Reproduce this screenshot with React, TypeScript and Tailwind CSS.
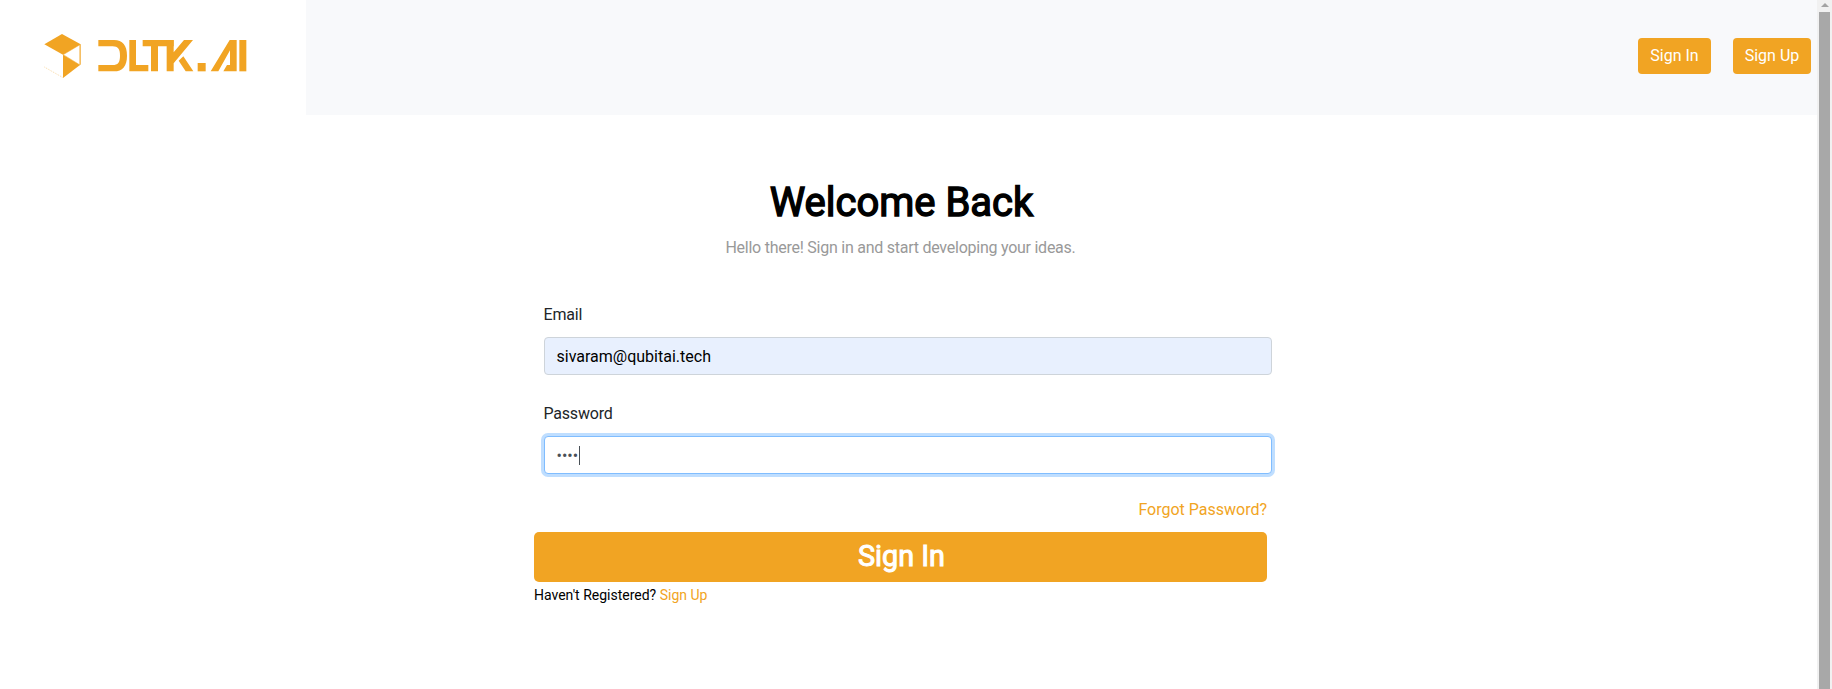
import React from "react";

function Logo() {
  return (
    <svg width="230" height="70" viewBox="0 0 690 210" fill="#f1a423" role="img" aria-label="DLTK.AI">
      <path d="M43 73 L96 42 L152 73 L99 104 Z" />
      <path d="M99 104 L150 135 L99 174 Z" />
      <path d="M148 73 H153 V134 H148 Z" opacity="0.7" />
      <path d="M100 104 L150 74 M100 104 L150 135" stroke="#f1a423" strokeWidth="1.5" fill="none" />
      <path d="M43 141 L99 173" stroke="#f1a423" strokeWidth="2" strokeDasharray="3 3" opacity="0.6" fill="none" />
      <path d="M205 60 H252 C278 60 291 76 291 107 C291 138 278 154 252 154 H205 V135 H248 C264 135 270 127 270 107 C270 87 264 79 248 79 H205 Z" />
      <path d="M298 60 H318 V135 H355 V154 H298 Z" />
      <path d="M338 60 H431 V79 H384 V154 H363 V79 H338 Z" />
      <path d="M410 60 H431 V97 L462 60 H489 L431 130 V154 H410 Z" />
      <path d="M446 122 L460 109 L490 154 H467 Z" />
      <path d="M503 129 H527 V154 H503 Z" />
      <path d="M542 154 L599 60 H620 V154 H580 L591 135 H600 V91 L565 154 Z" />
      <path d="M628 60 H649 V154 H628 Z" />
    </svg>
  );
}

function Header() {
  return (
    <header className="flex h-[115px] bg-[#f8f9fb]">
      <div className="w-[306px] bg-white pt-5 pl-[30px]">
        <Logo />
      </div>
      <nav className="flex flex-1 items-start justify-end gap-[22px] pt-[38px] pr-[6px]">
        <button className="h-9 w-[73px] rounded-[4px] bg-[#f1a423] pb-px text-white">Sign In</button>
        <button className="h-9 w-[78px] rounded-[4px] bg-[#f1a423] pb-px text-white">Sign Up</button>
      </nav>
    </header>
  );
}

function Scrollbar() {
  return (
    <div className="flex w-[15px] shrink-0 flex-col bg-[#f1f1f1] pr-[2px] pl-[2px]">
      <div className="flex h-3 items-start justify-center pt-[3px]">
        <svg width="8" height="4" viewBox="0 0 8 4" fill="#a3a3a3">
          <path d="M4 0 L8 4 H0 Z" />
        </svg>
      </div>
      <div className="flex-1 bg-[#a8a8a8]" />
    </div>
  );
}

export default function App() {
  return (
    <div className="flex h-[689px] w-[1832px] overflow-hidden bg-white font-['Roboto',sans-serif] text-[16px] leading-6 text-[#212529]">
      <div className="flex w-[1817px] flex-col">
        <Header />
        <main className="ml-[534px] flex w-[738px] flex-col">
          <div className="mr-[5px] flex flex-col items-center text-center">
            <h1 className="mt-[62px] ml-[2px] text-[40px] leading-[52px] font-normal text-black [-webkit-text-stroke:1.4px_black]">
              Welcome Back
            </h1>
            <p className="mt-[7px] tracking-[-0.25px] text-[#999999]">
              Hello there! Sign in and start developing your ideas.
            </p>
          </div>
          <div className="ml-[9.5px] flex flex-col">
            <label className="mt-[43px] tracking-[-0.2px]">Email</label>
            <div className="mt-[10px] ml-[0.5px] flex h-[38px] items-center rounded-[4px] border border-[#ced4da] bg-[#e8f0fe] px-[11.5px] pt-[2px] text-black">
              sivaram@qubitai.tech
            </div>
            <label className="mt-[27px] tracking-[-0.2px]">Password</label>
            <div className="mt-[10px] ml-[0.5px] flex h-[38px] items-center rounded-[4px] border border-[#80bdff] bg-white px-[11.5px] text-[#495057] shadow-[0_0_0_3px_#bfdeff]">
              <span className="pt-[2px]">••••</span>
              <span className="ml-[0.75px] h-[19px] w-px bg-[#495057]" />
            </div>
          </div>
          <div className="mr-[5px] flex flex-col">
            <a className="mt-[24px] self-end text-[#f1a423]">Forgot Password?</a>
            <button className="mt-[10px] h-[50px] rounded-[5px] bg-[#f1a423] pb-[3px] pl-[2px] text-[28.8px] text-white [-webkit-text-stroke:1px_white]">
              Sign In
            </button>
            <p className="mt-px text-[14px] text-black">
              Haven't Registered? <a className="text-[#f1a423]">Sign Up</a>
            </p>
          </div>
        </main>
      </div>
      <Scrollbar />
    </div>
  );
}
